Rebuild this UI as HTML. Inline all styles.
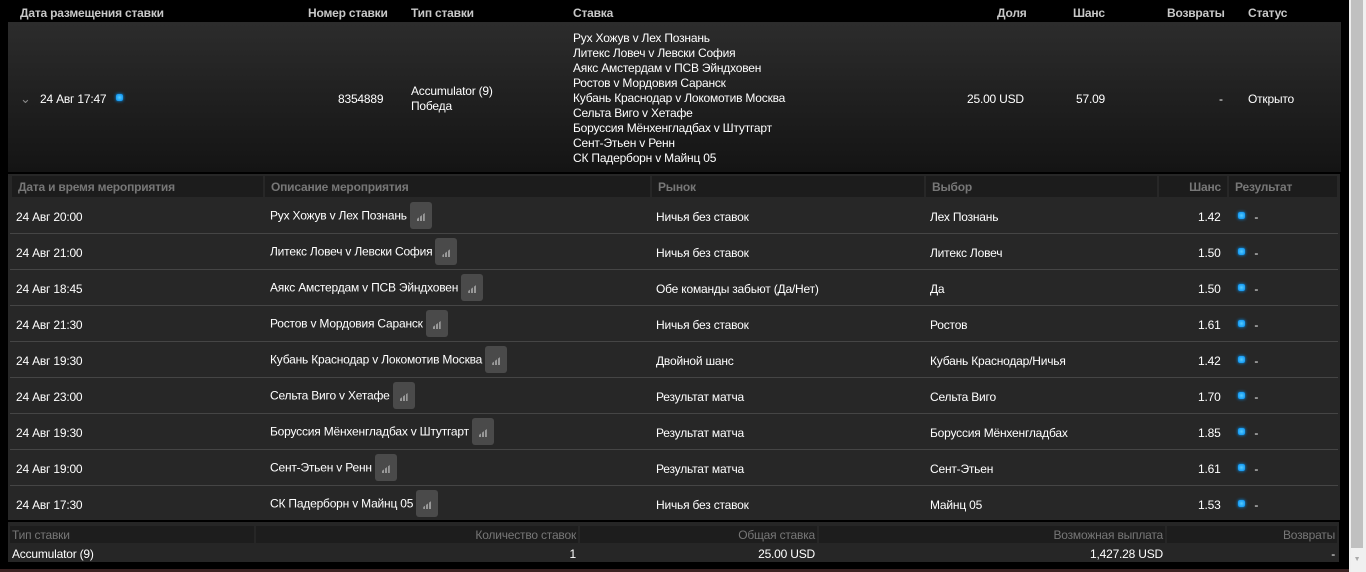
<!DOCTYPE html>
<html><head><meta charset="utf-8"><style>
*{margin:0;padding:0;box-sizing:border-box}
body{width:1366px;height:572px;background:#000;font-family:"Liberation Sans",Arial,sans-serif;font-size:12px;color:#fff;position:relative;overflow:hidden;letter-spacing:-0.2px}
.a{position:absolute;white-space:nowrap}
.h{font-weight:bold;color:#c8c8c8;top:6px}
.main{position:absolute;left:8px;top:22px;width:1333px;height:150px;background:linear-gradient(#2c2c2c,#141414)}
.sub{position:absolute;left:8px;top:174px;width:1332px;height:346px;background:#272727}
.sh{position:absolute;top:2px;height:21px;background:#1c1c1c;color:#777;font-weight:bold;line-height:23px;padding:0 6px}
.row{position:absolute;left:2px;width:1328px;height:36px;border-bottom:1px solid #454545}
.row div{position:absolute;top:12px;white-space:nowrap}
.ic{display:inline-block;width:22px;height:27px;background:#4a4a4a;border-radius:3px;vertical-align:middle;margin-left:3px;position:relative;top:-1px}
.ic:after{content:"";position:absolute;left:7px;top:11px;width:8px;height:8px;background:linear-gradient(90deg,#999 0 2px,transparent 2px 3px,#999 3px 5px,transparent 5px 6px,#999 6px 8px);clip-path:polygon(0 75%,33% 50%,66% 25%,100% 0,100% 100%,0 100%)}
.dot{display:inline-block;width:7px;height:7px;border-radius:2px;background:radial-gradient(#5cf,#08e);box-shadow:0 0 3px #09f;vertical-align:middle;position:relative;top:-2px}
.foot{position:absolute;left:8px;top:522px;width:1331px;height:40px;background:#262626}
.fh{position:absolute;top:4px;height:17px;background:#1d1d1d;color:#777;line-height:18px;padding:0 2px}
.fd{position:absolute;top:23px;line-height:18px;padding:0 2px}
</style></head><body>
<div class="a h" style="left:20px">Дата размещения ставки</div>
<div class="a h" style="left:308px">Номер ставки</div>
<div class="a h" style="left:411px">Тип ставки</div>
<div class="a h" style="left:573px">Ставка</div>
<div class="a h" style="left:997px">Доля</div>
<div class="a h" style="left:1073px">Шанс</div>
<div class="a h" style="left:1167px">Возвраты</div>
<div class="a h" style="left:1248px">Статус</div>
<div class="main"></div>
<div class="a" style="left:20px;top:91px;color:#888;font-size:13px">&#8964;</div>
<div class="a" style="left:40px;top:92px">24 Авг 17:47 &nbsp;&nbsp;<span class="dot"></span></div>
<div class="a" style="left:338px;top:92px">8354889</div>
<div class="a" style="left:411px;top:84px;line-height:15px">Accumulator (9)<br>Победа</div>
<div class="a" style="left:573px;top:31px;line-height:15px">Рух Хожув v Лех Познань<br>Литекс Ловеч v Левски София<br>Аякс Амстердам v ПСВ Эйндховен<br>Ростов v Мордовия Саранск<br>Кубань Краснодар v Локомотив Москва<br>Сельта Виго v Хетафе<br>Боруссия Мёнхенгладбах v Штутгарт<br>Сент-Этьен v Ренн<br>СК Падерборн v Майнц 05</div>
<div class="a" style="left:967px;top:92px">25.00 USD</div>
<div class="a" style="left:1076px;top:92px">57.09</div>
<div class="a" style="left:1219px;top:92px">-</div>
<div class="a" style="left:1248px;top:92px">Открыто</div>
<div class="a" style="left:1349px;top:0;width:2px;height:572px;background:#eee"></div>
<div class="a" style="left:1351px;top:0;width:12px;height:548px;background:#c0c0c0"></div>
<div class="a" style="left:1363px;top:0;width:3px;height:572px;background:#f0f0f0"></div>
<div class="a" style="left:1351px;top:548px;width:12px;height:24px;background:#f0f0f0;color:#aaa;font-size:7px;text-align:center;line-height:24px">&#9660;</div>
<div class="sub">
<div class="sh" style="left:4px;width:251px">Дата и время мероприятия</div>
<div class="sh" style="left:257px;width:385px">Описание мероприятия</div>
<div class="sh" style="left:644px;width:272px">Рынок</div>
<div class="sh" style="left:918px;width:231px">Выбор</div>
<div class="sh" style="left:1151px;width:68px;text-align:right">Шанс</div>
<div class="sh" style="left:1221px;width:108px">Результат</div>
<div class="row" style="top:24px"><div style="left:6px">24 Авг 20:00</div><div style="left:260px;top:5px">Рух Хожув v Лех Познань<span class="ic"></span></div><div style="left:646px">Ничья без ставок</div><div style="left:920px">Лех Познань</div><div style="left:1188px">1.42</div><div style="left:1228px"><span class="dot"></span>&nbsp;&nbsp; -</div></div>
<div class="row" style="top:60px"><div style="left:6px">24 Авг 21:00</div><div style="left:260px;top:5px">Литекс Ловеч v Левски София<span class="ic"></span></div><div style="left:646px">Ничья без ставок</div><div style="left:920px">Литекс Ловеч</div><div style="left:1188px">1.50</div><div style="left:1228px"><span class="dot"></span>&nbsp;&nbsp; -</div></div>
<div class="row" style="top:96px"><div style="left:6px">24 Авг 18:45</div><div style="left:260px;top:5px">Аякс Амстердам v ПСВ Эйндховен<span class="ic"></span></div><div style="left:646px">Обе команды забьют (Да/Нет)</div><div style="left:920px">Да</div><div style="left:1188px">1.50</div><div style="left:1228px"><span class="dot"></span>&nbsp;&nbsp; -</div></div>
<div class="row" style="top:132px"><div style="left:6px">24 Авг 21:30</div><div style="left:260px;top:5px">Ростов v Мордовия Саранск<span class="ic"></span></div><div style="left:646px">Ничья без ставок</div><div style="left:920px">Ростов</div><div style="left:1188px">1.61</div><div style="left:1228px"><span class="dot"></span>&nbsp;&nbsp; -</div></div>
<div class="row" style="top:168px"><div style="left:6px">24 Авг 19:30</div><div style="left:260px;top:5px">Кубань Краснодар v Локомотив Москва<span class="ic"></span></div><div style="left:646px">Двойной шанс</div><div style="left:920px">Кубань Краснодар/Ничья</div><div style="left:1188px">1.42</div><div style="left:1228px"><span class="dot"></span>&nbsp;&nbsp; -</div></div>
<div class="row" style="top:204px"><div style="left:6px">24 Авг 23:00</div><div style="left:260px;top:5px">Сельта Виго v Хетафе<span class="ic"></span></div><div style="left:646px">Результат матча</div><div style="left:920px">Сельта Виго</div><div style="left:1188px">1.70</div><div style="left:1228px"><span class="dot"></span>&nbsp;&nbsp; -</div></div>
<div class="row" style="top:240px"><div style="left:6px">24 Авг 19:30</div><div style="left:260px;top:5px">Боруссия Мёнхенгладбах v Штутгарт<span class="ic"></span></div><div style="left:646px">Результат матча</div><div style="left:920px">Боруссия Мёнхенгладбах</div><div style="left:1188px">1.85</div><div style="left:1228px"><span class="dot"></span>&nbsp;&nbsp; -</div></div>
<div class="row" style="top:276px"><div style="left:6px">24 Авг 19:00</div><div style="left:260px;top:5px">Сент-Этьен v Ренн<span class="ic"></span></div><div style="left:646px">Результат матча</div><div style="left:920px">Сент-Этьен</div><div style="left:1188px">1.61</div><div style="left:1228px"><span class="dot"></span>&nbsp;&nbsp; -</div></div>
<div class="row" style="top:312px;border-bottom:none"><div style="left:6px">24 Авг 17:30</div><div style="left:260px;top:5px">СК Падерборн v Майнц 05<span class="ic"></span></div><div style="left:646px">Ничья без ставок</div><div style="left:920px">Майнц 05</div><div style="left:1188px">1.53</div><div style="left:1228px"><span class="dot"></span>&nbsp;&nbsp; -</div></div>
</div>
<div class="foot">
<div class="fh" style="left:2px;width:244px">Тип ставки</div>
<div class="fh" style="left:248px;width:322px;text-align:right">Количество ставок</div>
<div class="fh" style="left:572px;width:237px;text-align:right">Общая ставка</div>
<div class="fh" style="left:811px;width:346px;text-align:right">Возможная выплата</div>
<div class="fh" style="left:1159px;width:170px;text-align:right">Возвраты</div>
<div class="fd" style="left:2px;width:244px">Accumulator (9)</div>
<div class="fd" style="left:248px;width:322px;text-align:right">1</div>
<div class="fd" style="left:572px;width:237px;text-align:right">25.00 USD</div>
<div class="fd" style="left:811px;width:346px;text-align:right">1,427.28 USD</div>
<div class="fd" style="left:1159px;width:170px;text-align:right">-</div>
</div>
<div class="a" style="left:0;top:569px;width:1349px;height:3px;background:#3a2222"></div>
</body></html>
